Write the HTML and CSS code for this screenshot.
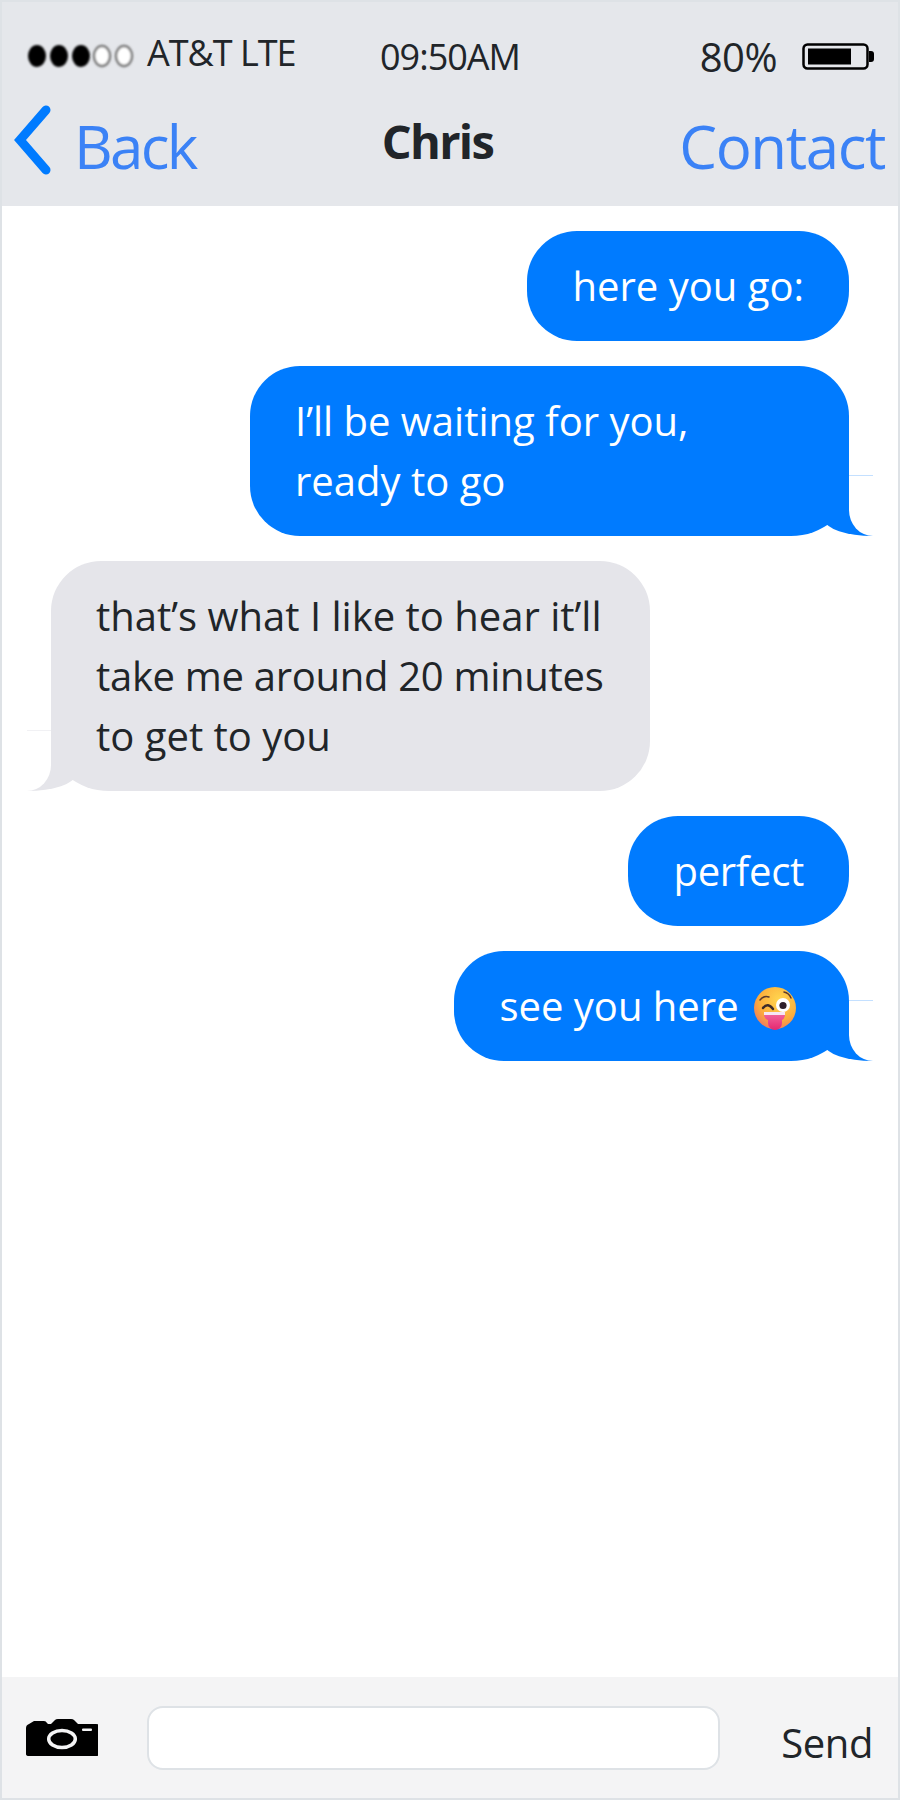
FILE: index.html
```html
<!DOCTYPE html>
<html lang="en">
<head>
    <meta charset="UTF-8">
    <meta name="viewport" content="width=device-width, initial-scale=1.0">
    <title>Chris</title>
    <link rel="stylesheet" href="styles.css">
</head>
<body>
    <div class="phone">
        <header class="top-bar">
            <div class="status-bar">
                <div class="carrier">
                    <svg class="signal" width="112" height="30" viewBox="0 0 112 30">
                        <defs>
                            <filter id="soft" x="-20%" y="-20%" width="140%" height="140%"><feGaussianBlur stdDeviation="1.2"/></filter>
                        </defs>
                        <g filter="url(#soft)">
                            <ellipse cx="12" cy="15" rx="9" ry="11" fill="#000"/>
                            <ellipse cx="34" cy="15" rx="9" ry="11" fill="#000"/>
                            <ellipse cx="56" cy="15" rx="9" ry="11" fill="#000"/>
                            <ellipse cx="77" cy="15" rx="8" ry="10" fill="#fff" stroke="#777" stroke-width="2.5"/>
                            <ellipse cx="99" cy="15" rx="8" ry="10" fill="#fff" stroke="#777" stroke-width="2.5"/>
                        </g>
                    </svg>
                    <span class="carrier-name">AT&amp;T LTE</span>
                </div>
                <span class="clock">09:50AM</span>
                <div class="battery-box">
                    <span class="percent">80%</span>
                    <svg class="battery" width="72" height="27" viewBox="0 0 72 27">
                        <rect x="1.5" y="1.5" width="64" height="24" rx="4" fill="none" stroke="#000" stroke-width="2.5"/>
                        <rect x="6" y="5.5" width="43" height="16" fill="#000"/>
                        <path d="M67 8h2a3 3 0 0 1 3 3v5a3 3 0 0 1-3 3h-2z" fill="#000"/>
                    </svg>
                </div>
            </div>
            <nav class="nav-bar">
                <a class="nav-link back-link">
                    <svg class="chevron" width="38" height="72" viewBox="0 0 38 72">
                        <path d="M33 6L7 36l26 30" fill="none" stroke="#007bff" stroke-width="9" stroke-linecap="round"/>
                    </svg>
                    Back
                </a>
                <span class="contact-name">Chris</span>
                <a class="nav-link">Contact</a>
            </nav>
        </header>

        <main class="messages">
            <div class="bubble from-me">here you go:</div>
            <div class="bubble from-me tail">I’ll be waiting for you,<br>ready to go</div>
            <div class="bubble from-them tail">that’s what I like to hear it’ll<br><span class="tight">take me around 20 minutes</span><br>to get to you</div>
            <div class="bubble from-me"><span class="tight">perfect</span></div>
            <div class="bubble from-me tail">see you here
                <svg class="emoji" width="42" height="44" viewBox="0 0 42 44">
                    <defs>
                        <radialGradient id="face" cx="0.6" cy="0.3" r="0.8">
                            <stop offset="0" stop-color="#ffd64f"/>
                            <stop offset="0.6" stop-color="#fcae3c"/>
                            <stop offset="1" stop-color="#ee6f63"/>
                        </radialGradient>
                        <linearGradient id="tongue" x1="0" y1="0" x2="0" y2="1">
                            <stop offset="0" stop-color="#f0609a"/>
                            <stop offset="1" stop-color="#e4286f"/>
                        </linearGradient>
                    </defs>
                    <circle cx="21" cy="21" r="21" fill="url(#face)"/>
                    <path d="M6 13q4-5 9-3M30 5q5 1 7 6" fill="none" stroke="#5b3a2e" stroke-width="1.5" stroke-linecap="round"/>
                    <path d="M9 21q5-6 10 1" fill="none" stroke="#3b2a2a" stroke-width="2.4" stroke-linecap="round"/>
                    <circle cx="29" cy="18" r="7" fill="#fff"/>
                    <circle cx="29" cy="18.5" r="3.6" fill="#2e1f2b"/>
                    <rect x="10" y="25" width="21" height="3" fill="#f6e6f4"/>
                    <path d="M10 28h21q-.5 4-3 5v3a7 7 0 0 1-14 0v-3q-3.5-1-4-5z" fill="url(#tongue)"/>
                </svg>
            </div>
        </main>

        <footer class="input-bar">
            <svg class="camera" width="72" height="37" viewBox="0 0 72 37">
                <path d="M8 2h10q2 0 3 2l1 1h3l4-4q1-1 3-1h13q2 0 3 1l4 4h18q3 0 3 2v28q0 2-3 2H3q-3 0-3-2V9q0-3 3-4z" fill="#000"/>
                <ellipse cx="36" cy="20" rx="13.3" ry="8.5" fill="none" stroke="#f4f4f5" stroke-width="3.5"/>
                <rect x="56" y="9.5" width="10" height="2.5" rx="1" fill="#f4f4f5"/>
            </svg>
            <div class="text-input"></div>
            <span class="send">Send</span>
        </footer>
    </div>
</body>
</html>
```

FILE: styles.css
```css
* {
    box-sizing: border-box;
}
html, body {
    margin: 0;
    height: 100%;
}
body {
    font-family: "Open Sans", "Noto Sans", sans-serif;
    color: #212529;
    background: #fff;
}
.phone {
    height: 1800px;
    display: flex;
    flex-direction: column;
    border: 2px solid #dee2e6;
}
.top-bar {
    height: 204px;
    background-color: #e5e7eb;
}
.status-bar {
    display: flex;
    align-items: center;
    height: 108px;
    padding: 0 24px 0 23px;
}
.carrier {
    display: flex;
    align-items: center;
    gap: 10px;
    width: 355px;
}
.carrier-name {
    font-size: 36px;
    letter-spacing: -1px;
    margin-top: -8px;
}
.clock {
    font-size: 36px;
    letter-spacing: -1px;
}
.battery-box {
    display: flex;
    align-items: center;
    gap: 25px;
    margin-left: auto;
}
.percent {
    font-size: 40px;
    letter-spacing: -0.5px;
}
.nav-bar {
    display: flex;
    justify-content: space-between;
    align-items: center;
    height: 72px;
    padding: 0 13px 0 11px;
}
.nav-link {
    display: flex;
    align-items: center;
    gap: 23px;
    font-size: 60px;
    letter-spacing: -1.4px;
    color: #3b82f6;
}
.back-link {
    letter-spacing: -2.7px;
}
.chevron {
    margin-top: -12px;
}
.contact-name {
    font-size: 47px;
    font-weight: 700;
    letter-spacing: -1.7px;
    margin-top: -10px;
}
.messages {
    flex: 1;
    display: flex;
    flex-direction: column;
    gap: 25px;
    padding: 25px 25px 0 25px;
    background: #fff;
}
.bubble {
    position: relative;
    padding: 25px 45px;
    border-radius: 50px;
    font-size: 40px;
    line-height: 60px;
    white-space: nowrap;
}
.tail {
    width: 599px;
}
.tight {
    letter-spacing: -0.3px;
}
.from-me {
    align-self: flex-end;
    margin-right: 24px;
    background-color: #007bff;
    color: #fff;
}
.from-them {
    align-self: flex-start;
    margin-left: 24px;
    background-color: #e5e5ea;
}
.from-me.tail {
    border-bottom-right-radius: 58px 50px;
}
.from-them.tail {
    border-bottom-left-radius: 58px 50px;
}
.from-me.tail:last-child {
    width: auto;
}
/* tail is a coloured block with a white block cut over it */
.tail::before, .tail::after {
    content: "";
    position: absolute;
    bottom: 0;
    height: 60px;
}
.from-me.tail::before {
    right: -24px;
    width: 48px;
    background-color: #007bff;
    border-bottom-left-radius: 48px 16px;
}
.from-me.tail::after {
    right: -24px;
    width: 24px;
    background-color: #fff;
    border-top: 1px solid #c4e0ff;
    border-bottom-left-radius: 24px 26px;
}
.from-them.tail::before {
    left: -24px;
    width: 48px;
    background-color: #e5e5ea;
    border-bottom-right-radius: 48px 16px;
}
.from-them.tail::after {
    left: -24px;
    width: 24px;
    background-color: #fff;
    border-top: 1px solid #f1f1f4;
    border-bottom-right-radius: 24px 26px;
}
.emoji {
    vertical-align: -10px;
    margin-left: 5px;
    margin-right: 8px;
}
.input-bar {
    display: flex;
    align-items: center;
    height: 121px;
    padding: 0 25px 0 24px;
    background-color: #f4f4f5;
}
.camera {
    flex: none;
    margin-right: 49px;
}
.text-input {
    width: 573px;
    height: 64px;
    background-color: #fff;
    border: 2px solid #dee2e6;
    border-radius: 16px;
}
.send {
    margin-left: auto;
    margin-top: 9px;
    font-size: 40px;
    letter-spacing: -0.4px;
}
```
